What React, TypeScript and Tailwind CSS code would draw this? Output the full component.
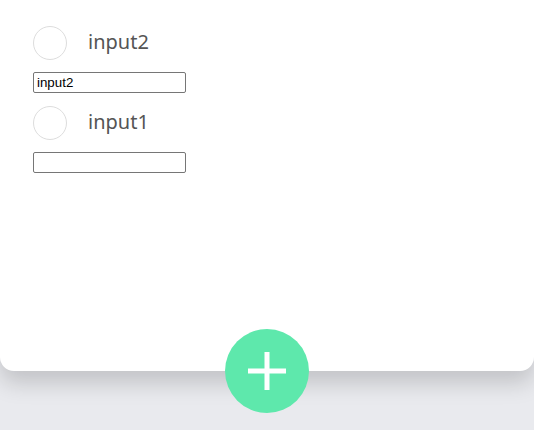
import React, { useState } from 'react';

const font = { fontFamily: '"Noto Sans", Roboto, sans-serif' };

function Row({ label, value }: { label: string; value: string }) {
  const [text, setText] = useState(value);
  return (
    <div className="flex flex-col">
      <div className="flex items-center h-[34px]">
        <div className="w-[34px] h-[34px] rounded-full border border-[#dddddd] bg-white" />
        <span className="ml-[21px] -mt-[3px] text-[20px] leading-none text-[#555555]" style={font}>
          {label}
        </span>
      </div>
      <input
        className="mt-[12px] w-[153px] h-[21px] border border-[#767676] rounded-[2px] px-[3px] text-[13.33px] text-black outline-none font-['Liberation_Sans',Arial,sans-serif]"
        value={text}
        onChange={(e) => setText(e.target.value)}
      />
    </div>
  );
}

export default function App() {
  return (
    <div className="relative w-[534px] h-[430px] bg-[#e9eaee] overflow-hidden">
      <div className="relative h-[371px] bg-white rounded-b-[14px] shadow-[0_12px_22px_rgba(0,0,0,0.17)]">
        <div className="flex flex-col gap-[13px] pl-[33px] pt-[26px]">
          <Row label="input2" value="input2" />
          <Row label="input1" value="" />
        </div>
      </div>
      <button className="absolute left-[225px] top-[329px] w-[84px] h-[84px] rounded-full bg-[#5ee8ac] flex items-center justify-center">
        <svg width="38" height="38" viewBox="0 0 38 38">
          <rect x="16.5" y="0" width="5" height="38" fill="white" />
          <rect x="0" y="16.5" width="38" height="5" fill="white" />
        </svg>
      </button>
    </div>
  );
}
